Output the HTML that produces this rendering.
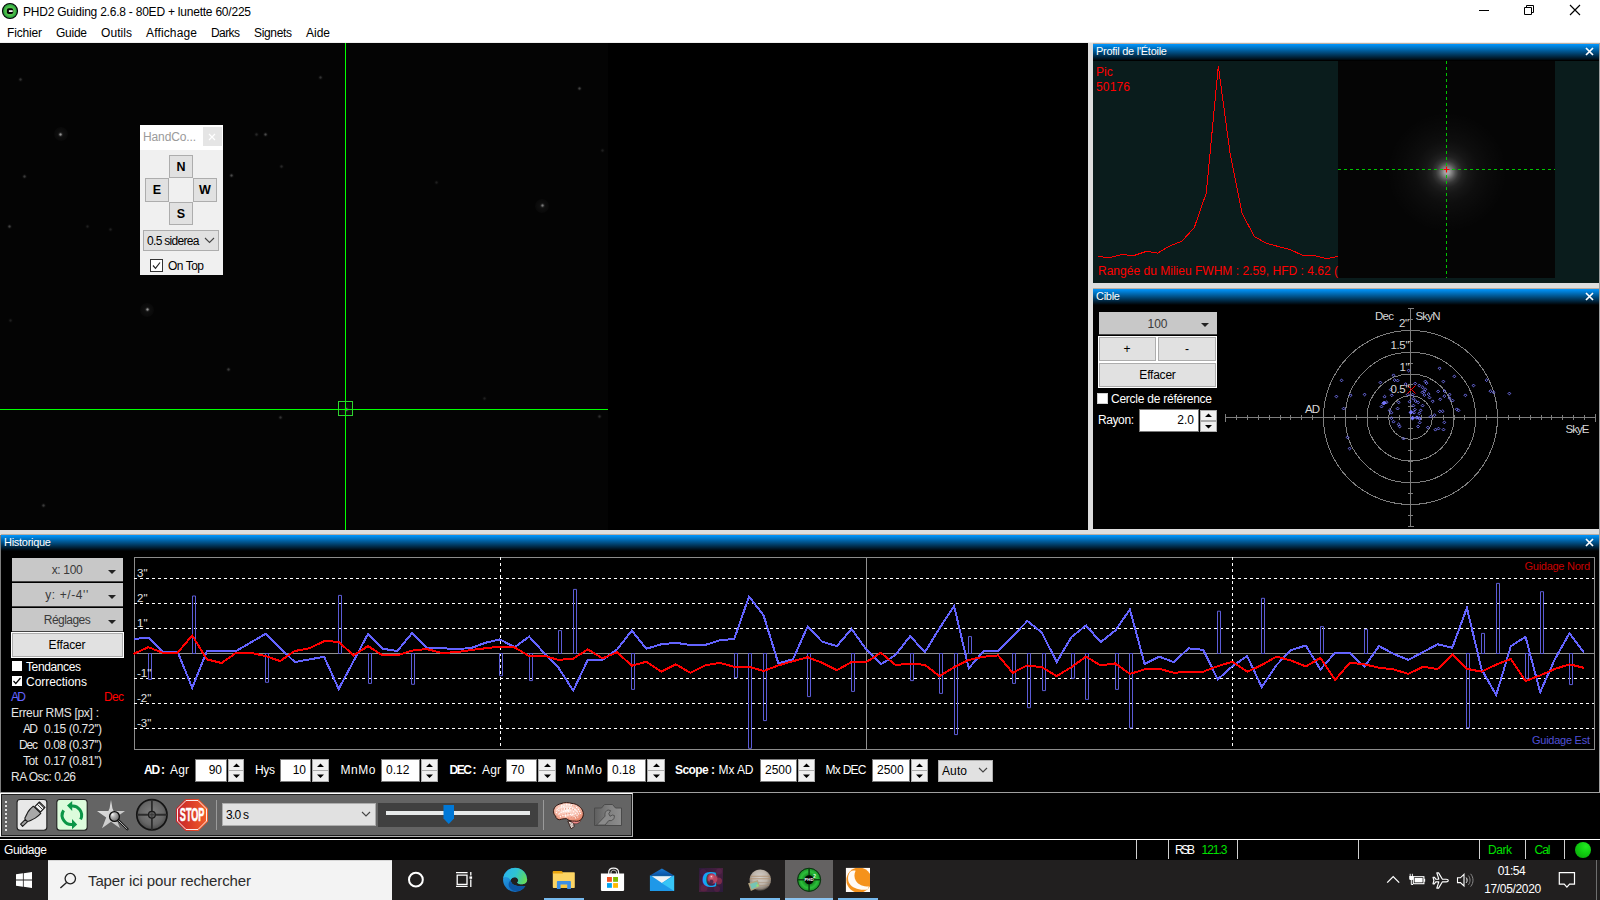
<!DOCTYPE html>
<html><head><meta charset="utf-8"><title>PHD2 Guiding</title>
<style>
html,body{margin:0;padding:0;background:#000;}
body{width:1600px;height:900px;overflow:hidden;position:relative;font-family:"Liberation Sans",sans-serif;font-size:12px;}
div,span.t,svg{position:absolute;box-sizing:border-box;}
.t{white-space:pre;display:block;}
.ttl{background:linear-gradient(#0097ff 0%,#000 100%);border-top:0;}
.btn{background:#e1e1e1;border:1px solid #adadad;}
.dd{background:#c8c8c8;border-bottom:1px solid #444;}
.sp{background:#fff;border:1px solid #7a7a7a;}
.sb{background:#f0f0f0;border:1px solid #acacac;}
</style></head><body>
<div style="left:0px;top:0px;width:1600px;height:43px;background:#fff;"></div><div style="left:0px;top:42px;width:1600px;height:1px;background:#f0f0f0;"></div><svg style="left:1px;top:1.85px" width="18" height="18" viewBox="0 0 18 18"><defs><radialGradient id="apg" cx="50%" cy="50%" r="50%"><stop offset="0" stop-color="#4cbc48"/><stop offset="0.55" stop-color="#56c44e"/><stop offset="0.85" stop-color="#2ea640"/><stop offset="1" stop-color="#1a8c38"/></radialGradient></defs><circle cx="9" cy="9" r="7.5" fill="url(#apg)" stroke="#060606" stroke-width="1.2"/><rect x="5.9" y="6.15" width="6.3" height="5.9" rx="1.8" fill="#050505"/><rect x="7.9" y="8.2" width="3.8" height="1.8" fill="#f4f4f4"/></svg><span class="t" style="top:4.00px;height:17px;line-height:17px;font-size:12px;color:#000;letter-spacing:-0.223px;left:23.00px;">PHD2 Guiding 2.6.8 - 80ED + lunette 60/225</span><span class="t" style="top:25.00px;height:17px;line-height:17px;font-size:12px;color:#000;letter-spacing:-0.169px;left:7.00px;">Fichier</span><span class="t" style="top:25.00px;height:17px;line-height:17px;font-size:12px;color:#000;letter-spacing:-0.258px;left:56.00px;">Guide</span><span class="t" style="top:25.00px;height:17px;line-height:17px;font-size:12px;color:#000;letter-spacing:0.062px;left:101.00px;">Outils</span><span class="t" style="top:25.00px;height:17px;line-height:17px;font-size:12px;color:#000;letter-spacing:0.146px;left:146.00px;">Affichage</span><span class="t" style="top:25.00px;height:17px;line-height:17px;font-size:12px;color:#000;letter-spacing:-0.586px;left:211.00px;">Darks</span><span class="t" style="top:25.00px;height:17px;line-height:17px;font-size:12px;color:#000;letter-spacing:-0.339px;left:254.00px;">Signets</span><span class="t" style="top:25.00px;height:17px;line-height:17px;font-size:12px;color:#000;letter-spacing:-0.010px;left:306.00px;">Aide</span><svg style="left:1470px;top:0" width="130" height="22" viewBox="0 0 130 22" fill="none" stroke="#000" stroke-width="1"><path d="M9 10.5H19"/><path d="M54.5 7.5h7v7h-7z"/><path d="M56.5 7.5v-2h7v7h-2"/><path d="M100 5l10 10M110 5l-10 10" stroke-width="1.15"/></svg><div style="left:0px;top:43px;width:1088px;height:487px;background:#000;overflow:hidden;"><div style="left:0;top:0;width:608px;height:487px;background:#040404"></div><div style="left:58px;top:88.9px;width:5px;height:5px;border-radius:50%;background:radial-gradient(circle,rgba(255,255,255,0.55) 0,rgba(255,255,255,0.47) 22%,rgba(255,255,255,0.12) 45%,rgba(255,255,255,0.028) 70%,rgba(255,255,255,0) 100%);"></div><div style="left:53.5px;top:84.4px;width:14px;height:14px;border-radius:50%;background:radial-gradient(circle,rgba(255,255,255,.06) 0,rgba(255,255,255,.035) 40%,rgba(255,255,255,0) 100%);"></div><div style="left:18px;top:33.9px;width:5px;height:5px;border-radius:50%;background:radial-gradient(circle,rgba(255,255,255,0.19) 0,rgba(255,255,255,0.16) 22%,rgba(255,255,255,0.04) 45%,rgba(255,255,255,0.010) 70%,rgba(255,255,255,0) 100%);"></div><div style="left:22px;top:130.9px;width:5px;height:5px;border-radius:50%;background:radial-gradient(circle,rgba(255,255,255,0.22) 0,rgba(255,255,255,0.19) 22%,rgba(255,255,255,0.05) 45%,rgba(255,255,255,0.011) 70%,rgba(255,255,255,0) 100%);"></div><div style="left:7px;top:180.9px;width:5px;height:5px;border-radius:50%;background:radial-gradient(circle,rgba(255,255,255,0.25) 0,rgba(255,255,255,0.21) 22%,rgba(255,255,255,0.05) 45%,rgba(255,255,255,0.012) 70%,rgba(255,255,255,0) 100%);"></div><div style="left:144.5px;top:264.4px;width:5px;height:5px;border-radius:50%;background:radial-gradient(circle,rgba(255,255,255,0.55) 0,rgba(255,255,255,0.47) 22%,rgba(255,255,255,0.12) 45%,rgba(255,255,255,0.028) 70%,rgba(255,255,255,0) 100%);"></div><div style="left:140px;top:259.9px;width:14px;height:14px;border-radius:50%;background:radial-gradient(circle,rgba(255,255,255,.06) 0,rgba(255,255,255,.035) 40%,rgba(255,255,255,0) 100%);"></div><div style="left:263px;top:88.9px;width:5px;height:5px;border-radius:50%;background:radial-gradient(circle,rgba(255,255,255,0.28) 0,rgba(255,255,255,0.23) 22%,rgba(255,255,255,0.06) 45%,rgba(255,255,255,0.014) 70%,rgba(255,255,255,0) 100%);"></div><div style="left:229px;top:129.9px;width:5px;height:5px;border-radius:50%;background:radial-gradient(circle,rgba(255,255,255,0.28) 0,rgba(255,255,255,0.23) 22%,rgba(255,255,255,0.06) 45%,rgba(255,255,255,0.014) 70%,rgba(255,255,255,0) 100%);"></div><div style="left:279px;top:121.4px;width:5px;height:5px;border-radius:50%;background:radial-gradient(circle,rgba(255,255,255,0.14) 0,rgba(255,255,255,0.12) 22%,rgba(255,255,255,0.03) 45%,rgba(255,255,255,0.007) 70%,rgba(255,255,255,0) 100%);"></div><div style="left:318px;top:32.4px;width:5px;height:5px;border-radius:50%;background:radial-gradient(circle,rgba(255,255,255,0.19) 0,rgba(255,255,255,0.16) 22%,rgba(255,255,255,0.04) 45%,rgba(255,255,255,0.010) 70%,rgba(255,255,255,0) 100%);"></div><div style="left:577px;top:43.4px;width:5px;height:5px;border-radius:50%;background:radial-gradient(circle,rgba(255,255,255,0.25) 0,rgba(255,255,255,0.21) 22%,rgba(255,255,255,0.05) 45%,rgba(255,255,255,0.012) 70%,rgba(255,255,255,0) 100%);"></div><div style="left:539.5px;top:160.4px;width:5px;height:5px;border-radius:50%;background:radial-gradient(circle,rgba(255,255,255,0.44) 0,rgba(255,255,255,0.37) 22%,rgba(255,255,255,0.10) 45%,rgba(255,255,255,0.022) 70%,rgba(255,255,255,0) 100%);"></div><div style="left:535px;top:155.9px;width:14px;height:14px;border-radius:50%;background:radial-gradient(circle,rgba(255,255,255,.06) 0,rgba(255,255,255,.035) 40%,rgba(255,255,255,0) 100%);"></div><div style="left:225.5px;top:323.9px;width:5px;height:5px;border-radius:50%;background:radial-gradient(circle,rgba(255,255,255,0.22) 0,rgba(255,255,255,0.19) 22%,rgba(255,255,255,0.05) 45%,rgba(255,255,255,0.011) 70%,rgba(255,255,255,0) 100%);"></div><div style="left:278px;top:372.4px;width:5px;height:5px;border-radius:50%;background:radial-gradient(circle,rgba(255,255,255,0.19) 0,rgba(255,255,255,0.16) 22%,rgba(255,255,255,0.04) 45%,rgba(255,255,255,0.010) 70%,rgba(255,255,255,0) 100%);"></div><div style="left:596.5px;top:371.4px;width:5px;height:5px;border-radius:50%;background:radial-gradient(circle,rgba(255,255,255,0.17) 0,rgba(255,255,255,0.14) 22%,rgba(255,255,255,0.04) 45%,rgba(255,255,255,0.008) 70%,rgba(255,255,255,0) 100%);"></div><div style="left:434px;top:137.4px;width:5px;height:5px;border-radius:50%;background:radial-gradient(circle,rgba(255,255,255,0.11) 0,rgba(255,255,255,0.09) 22%,rgba(255,255,255,0.02) 45%,rgba(255,255,255,0.006) 70%,rgba(255,255,255,0) 100%);"></div><div style="left:8px;top:274.9px;width:5px;height:5px;border-radius:50%;background:radial-gradient(circle,rgba(255,255,255,0.11) 0,rgba(255,255,255,0.09) 22%,rgba(255,255,255,0.02) 45%,rgba(255,255,255,0.006) 70%,rgba(255,255,255,0) 100%);"></div><div style="left:41px;top:459.9px;width:5px;height:5px;border-radius:50%;background:radial-gradient(circle,rgba(255,255,255,0.22) 0,rgba(255,255,255,0.19) 22%,rgba(255,255,255,0.05) 45%,rgba(255,255,255,0.011) 70%,rgba(255,255,255,0) 100%);"></div><div style="left:254px;top:88.9px;width:5px;height:5px;border-radius:50%;background:radial-gradient(circle,rgba(255,255,255,0.14) 0,rgba(255,255,255,0.12) 22%,rgba(255,255,255,0.03) 45%,rgba(255,255,255,0.007) 70%,rgba(255,255,255,0) 100%);"></div><div style="left:85px;top:180.9px;width:5px;height:5px;border-radius:50%;background:radial-gradient(circle,rgba(255,255,255,0.11) 0,rgba(255,255,255,0.09) 22%,rgba(255,255,255,0.02) 45%,rgba(255,255,255,0.006) 70%,rgba(255,255,255,0) 100%);"></div><div style="left:108px;top:183.9px;width:5px;height:5px;border-radius:50%;background:radial-gradient(circle,rgba(255,255,255,0.11) 0,rgba(255,255,255,0.09) 22%,rgba(255,255,255,0.02) 45%,rgba(255,255,255,0.006) 70%,rgba(255,255,255,0) 100%);"></div><div style="left:482px;top:352.9px;width:5px;height:5px;border-radius:50%;background:radial-gradient(circle,rgba(255,255,255,0.11) 0,rgba(255,255,255,0.09) 22%,rgba(255,255,255,0.02) 45%,rgba(255,255,255,0.006) 70%,rgba(255,255,255,0) 100%);"></div><div style="left:600px;top:104.9px;width:5px;height:5px;border-radius:50%;background:radial-gradient(circle,rgba(255,255,255,0.11) 0,rgba(255,255,255,0.09) 22%,rgba(255,255,255,0.02) 45%,rgba(255,255,255,0.006) 70%,rgba(255,255,255,0) 100%);"></div><div style="left:343.5px;top:364.4px;width:5px;height:5px;border-radius:50%;background:radial-gradient(circle,rgba(255,255,255,0.50) 0,rgba(255,255,255,0.42) 22%,rgba(255,255,255,0.11) 45%,rgba(255,255,255,0.025) 70%,rgba(255,255,255,0) 100%);"></div><div style="left:339px;top:359.9px;width:14px;height:14px;border-radius:50%;background:radial-gradient(circle,rgba(255,255,255,.06) 0,rgba(255,255,255,.035) 40%,rgba(255,255,255,0) 100%);"></div><div style="left:345px;top:0;width:1px;height:487px;background:#00ff00"></div><div style="left:0;top:366px;width:608px;height:1px;background:#00ff00"></div><div style="left:338px;top:358px;width:15px;height:15px;border:1px solid #2fd42f"></div></div><div style="left:1088px;top:43px;width:512px;height:487px;background:#dedede;"></div><div style="left:0px;top:530px;width:1600px;height:5px;background:#dedede;"></div><div style="left:140px;top:125px;width:83px;height:150px;background:#f0f0f0;"></div><div style="left:140px;top:125px;width:83px;height:25px;background:#fff;"></div><span class="t" style="top:129.00px;height:17px;line-height:17px;font-size:12px;color:#9a9a9a;letter-spacing:-0.129px;left:143.00px;">HandCo...</span><div style="left:203px;top:127px;width:19px;height:19px;background:#e5e5e5;"></div><svg style="left:208px;top:133px" width="8" height="8" viewBox="0 0 8 8"><path d="M1 1l6 6M7 1l-6 6" stroke="#fff" stroke-width="1.2"/></svg><div class="btn" style="left:169px;top:155px;width:24px;height:23px;"></div><div class="t" style="top:157.50px;height:18px;line-height:18px;font-size:12.5px;color:#000;font-weight:bold;left:181.00px;width:0;display:flex;justify-content:center;"><span>N</span></div><div class="btn" style="left:145px;top:178px;width:24px;height:24px;"></div><div class="t" style="top:181.00px;height:18px;line-height:18px;font-size:12.5px;color:#000;font-weight:bold;left:157.00px;width:0;display:flex;justify-content:center;"><span>E</span></div><div class="btn" style="left:193px;top:178px;width:24px;height:24px;"></div><div class="t" style="top:181.00px;height:18px;line-height:18px;font-size:12.5px;color:#000;font-weight:bold;left:205.00px;width:0;display:flex;justify-content:center;"><span>W</span></div><div class="btn" style="left:169px;top:202px;width:24px;height:23px;"></div><div class="t" style="top:204.50px;height:18px;line-height:18px;font-size:12.5px;color:#000;font-weight:bold;left:181.00px;width:0;display:flex;justify-content:center;"><span>S</span></div><div class="btn" style="left:143px;top:230px;width:76px;height:21px;"></div><span class="t" style="top:233.00px;height:17px;line-height:17px;font-size:12px;color:#000;letter-spacing:-0.688px;left:147.00px;">0.5 siderea</span><svg style="left:204px;top:237px" width="11" height="7" viewBox="0 0 11 7"><path d="M1 1l4.5 4.5L10 1" fill="none" stroke="#444" stroke-width="1.1"/></svg><div style="left:150px;top:259px;width:13px;height:13px;background:#fff;border:1px solid #333;"></div><svg style="left:151px;top:260px" width="11" height="11" viewBox="0 0 11 11"><path d="M2 5.5l2.5 2.8L9 2.5" fill="none" stroke="#222" stroke-width="1.2"/></svg><span class="t" style="top:258.00px;height:17px;line-height:17px;font-size:12px;color:#000;letter-spacing:-0.497px;left:168.00px;">On Top</span><div style="left:1093px;top:43px;width:506px;height:1px;background:#b9aea4;"></div><div class="ttl" style="left:1093px;top:44px;width:506px;height:16.5px;"></div><div style="left:1093px;top:60px;width:506px;height:1px;background:#000;"></div><span class="t" style="top:44.00px;height:15px;line-height:15px;font-size:11px;color:#fff;letter-spacing:-0.264px;left:1096.00px;">Profil de l'Étoile</span><svg style="left:1584px;top:46px" width="12" height="12" viewBox="0 0 12 12"><path d="M2 2l7 7M9 2l-7 7" stroke="#fff" stroke-width="1.7"/></svg><div style="left:1093px;top:61px;width:506px;height:222px;background:#0a1c1c;"></div><div style="left:1338px;top:61px;width:217px;height:217px;background:#050505;overflow:hidden;"><div style="left:49.3px;top:51px;width:120px;height:120px;border-radius:50%;background:radial-gradient(circle closest-side,rgba(255,255,255,.68) 0,rgba(255,255,255,.62) 4%,rgba(255,255,255,.46) 9%,rgba(255,255,255,.3) 14%,rgba(255,255,255,.19) 19%,rgba(255,255,255,.11) 26%,rgba(255,255,255,.065) 36%,rgba(255,255,255,.035) 52%,rgba(255,255,255,.015) 75%,rgba(255,255,255,0) 100%);"></div><svg style="left:0;top:0" width="217" height="217"><path d="M0 108.5H217M108.5 0V217" stroke="#00c400" stroke-width="1" stroke-dasharray="3 3" fill="none"/><path d="M105.500 108.5h6M108.5 105.500v6" stroke="#ff0000" stroke-width="1.2"/></svg></div><svg style="left:1093px;top:61px" width="506" height="222"><polyline fill="none" stroke="#ff0000" stroke-width="1" shape-rendering="crispEdges" points="5.2,195.4 16.2,196.7 29.0,193.4 40.5,194.7 53.7,190.3 64.7,192.1 76.2,185.2 89.0,180.1 101.3,166.5 113.3,132.0 125.3,5.0 137.1,92.4 149.1,152.5 161.4,175.5 173.4,182.4 186.2,185.7 197.7,188.8 210.4,194.7 222.0,194.7 233.5,197.7 245.0,195.4"/></svg><span class="t" style="top:64.00px;height:17px;line-height:17px;font-size:12px;color:#ff0000;left:1096.00px;">Pic</span><span class="t" style="top:79.00px;height:17px;line-height:17px;font-size:12px;color:#ff0000;letter-spacing:0.156px;left:1096.00px;">50176</span><span class="t" style="top:263.00px;height:17px;line-height:17px;font-size:12px;color:#ff0000;letter-spacing:0.014px;left:1098.00px;">Rangée du Milieu FWHM : 2.59, HFD : 4.62 (</span><div style="left:1093px;top:288px;width:506px;height:1px;background:#b9aea4;"></div><div class="ttl" style="left:1093px;top:289px;width:506px;height:16px;"></div><span class="t" style="top:289.00px;height:15px;line-height:15px;font-size:11px;color:#fff;letter-spacing:-0.270px;left:1096.00px;">Cible</span><svg style="left:1584px;top:291px" width="12" height="12" viewBox="0 0 12 12"><path d="M2 2l7 7M9 2l-7 7" stroke="#fff" stroke-width="1.7"/></svg><div style="left:1093px;top:305px;width:506px;height:224px;background:#000;"></div><div class="dd" style="left:1099px;top:312px;width:118px;height:23px;"></div><div class="t" style="top:316.00px;height:17px;line-height:17px;font-size:12px;color:#3a3a3a;left:1157.50px;width:0;display:flex;justify-content:center;"><span>100</span></div><svg style="left:1200px;top:322px" width="10" height="6" viewBox="0 0 10 6"><path d="M1 1h8L5 5z" fill="#222"/></svg><div style="left:1098px;top:336px;width:119px;height:52px;background:#fff;"></div><div class="btn" style="left:1099px;top:337px;width:57px;height:24px;"></div><div class="t" style="top:341.20px;height:17px;line-height:17px;font-size:12px;color:#000;left:1127.00px;width:0;display:flex;justify-content:center;"><span>+</span></div><div class="btn" style="left:1158px;top:337px;width:58px;height:24px;"></div><div class="t" style="top:341.20px;height:17px;line-height:17px;font-size:12px;color:#000;left:1187.00px;width:0;display:flex;justify-content:center;"><span>-</span></div><div class="btn" style="left:1099px;top:363px;width:117px;height:24px;"></div><div class="t" style="top:366.50px;height:17px;line-height:17px;font-size:12px;color:#000;letter-spacing:-0.219px;left:1157.50px;width:0;display:flex;justify-content:center;"><span>Effacer</span></div><div style="left:1097px;top:393px;width:11px;height:11px;background:#fff;border:1px solid #cfcfcf;"></div><span class="t" style="top:391.00px;height:17px;line-height:17px;font-size:12px;color:#fff;letter-spacing:-0.244px;left:1111.00px;">Cercle de référence</span><span class="t" style="top:411.50px;height:17px;line-height:17px;font-size:12px;color:#fff;letter-spacing:-0.406px;left:1098.00px;">Rayon:</span><div class="sp" style="left:1139px;top:409px;width:60px;height:23px;"></div><span class="t" style="top:412.00px;height:17px;line-height:17px;font-size:12px;color:#000;right:406.00px;">2.0</span><div class="sb" style="left:1200px;top:410px;width:17px;height:11px;"></div><div class="sb" style="left:1200px;top:421px;width:17px;height:11px;"></div><svg style="left:1205px;top:413px" width="7" height="16" viewBox="0 0 7 16"><path d="M0 4h7L3.5 0.5zM0 12h7L3.5 15.5z" fill="#000"/></svg><svg style="left:1220px;top:305px" width="379" height="224" viewBox="1220 305 379 224"><g fill="none" stroke="#7e7e7e" stroke-width="1" shape-rendering="crispEdges"><circle cx="1410.5" cy="417.5" r="21.75"/><circle cx="1410.5" cy="417.5" r="43.5"/><circle cx="1410.5" cy="417.5" r="65.25"/><circle cx="1410.5" cy="417.5" r="87"/><path d="M1225.62 417.5H1595.38 M1410.5 308.75V526.25"/><path d="M1225.62 413.5v8M1236.50 415v5M1247.38 415v5M1258.25 415v5M1269.12 415v5M1280.00 415v5M1290.88 415v5M1301.75 415v5M1312.62 415v5M1323.50 415v5M1334.38 415v5M1345.25 415v5M1356.12 415v5M1367.00 415v5M1377.88 415v5M1388.75 415v5M1399.62 415v5M1421.38 415v5M1432.25 415v5M1443.12 415v5M1454.00 415v5M1464.88 415v5M1475.75 415v5M1486.62 415v5M1497.50 415v5M1508.38 415v5M1519.25 415v5M1530.12 415v5M1541.00 415v5M1551.88 415v5M1562.75 415v5M1573.62 415v5M1584.50 415v5M1595.38 413.5v8M1407.5 308.75h6M1408 319.62h5M1408 330.50h5M1408 341.38h5M1408 352.25h5M1408 363.12h5M1408 374.00h5M1408 384.88h5M1408 395.75h5M1408 406.62h5M1408 428.38h5M1408 439.25h5M1408 450.12h5M1408 461.00h5M1408 471.88h5M1408 482.75h5M1408 493.62h5M1408 504.50h5M1408 515.38h5M1407.5 526.25h6"/></g><g fill="none" stroke="#7878ff" stroke-width="0.9"><path d="M1341.5 379.0l1.4 1.4l-1.4 1.4l-1.4-1.4z"/><path d="M1336.4 395.1l1.4 1.4l-1.4 1.4l-1.4-1.4z"/><path d="M1350.6 393.9l1.4 1.4l-1.4 1.4l-1.4-1.4z"/><path d="M1364.6 393.1l1.4 1.4l-1.4 1.4l-1.4-1.4z"/><path d="M1343.6 407.2l1.4 1.4l-1.4 1.4l-1.4-1.4z"/><path d="M1380.4 381.1l1.4 1.4l-1.4 1.4l-1.4-1.4z"/><path d="M1393.5 373.9l1.4 1.4l-1.4 1.4l-1.4-1.4z"/><path d="M1394.6 378.8l1.4 1.4l-1.4 1.4l-1.4-1.4z"/><path d="M1397.6 379.2l1.4 1.4l-1.4 1.4l-1.4-1.4z"/><path d="M1408.6 369.1l1.4 1.4l-1.4 1.4l-1.4-1.4z"/><path d="M1405.6 382.7l1.4 1.4l-1.4 1.4l-1.4-1.4z"/><path d="M1415.2 382.1l1.4 1.4l-1.4 1.4l-1.4-1.4z"/><path d="M1390.7 388.2l1.4 1.4l-1.4 1.4l-1.4-1.4z"/><path d="M1391.8 393.9l1.4 1.4l-1.4 1.4l-1.4-1.4z"/><path d="M1384.6 395.3l1.4 1.4l-1.4 1.4l-1.4-1.4z"/><path d="M1383.2 402.0l1.4 1.4l-1.4 1.4l-1.4-1.4z"/><path d="M1384.8 401.4l1.4 1.4l-1.4 1.4l-1.4-1.4z"/><path d="M1386.6 401.0l1.4 1.4l-1.4 1.4l-1.4-1.4z"/><path d="M1381.5 405.2l1.4 1.4l-1.4 1.4l-1.4-1.4z"/><path d="M1398.7 401.0l1.4 1.4l-1.4 1.4l-1.4-1.4z"/><path d="M1397.6 407.2l1.4 1.4l-1.4 1.4l-1.4-1.4z"/><path d="M1389.6 409.0l1.4 1.4l-1.4 1.4l-1.4-1.4z"/><path d="M1391.4 411.3l1.4 1.4l-1.4 1.4l-1.4-1.4z"/><path d="M1391.4 416.8l1.4 1.4l-1.4 1.4l-1.4-1.4z"/><path d="M1409.6 400.3l1.4 1.4l-1.4 1.4l-1.4-1.4z"/><path d="M1413.4 397.3l1.4 1.4l-1.4 1.4l-1.4-1.4z"/><path d="M1415.5 399.7l1.4 1.4l-1.4 1.4l-1.4-1.4z"/><path d="M1418.2 401.0l1.4 1.4l-1.4 1.4l-1.4-1.4z"/><path d="M1413.4 404.2l1.4 1.4l-1.4 1.4l-1.4-1.4z"/><path d="M1414.8 408.2l1.4 1.4l-1.4 1.4l-1.4-1.4z"/><path d="M1410.7 411.3l1.4 1.4l-1.4 1.4l-1.4-1.4z"/><path d="M1414.1 411.3l1.4 1.4l-1.4 1.4l-1.4-1.4z"/><path d="M1412.7 416.2l1.4 1.4l-1.4 1.4l-1.4-1.4z"/><path d="M1416.9 415.9l1.4 1.4l-1.4 1.4l-1.4-1.4z"/><path d="M1419.3 416.6l1.4 1.4l-1.4 1.4l-1.4-1.4z"/><path d="M1420.7 409.0l1.4 1.4l-1.4 1.4l-1.4-1.4z"/><path d="M1419.3 412.0l1.4 1.4l-1.4 1.4l-1.4-1.4z"/><path d="M1422.6 404.2l1.4 1.4l-1.4 1.4l-1.4-1.4z"/><path d="M1419.3 384.1l1.4 1.4l-1.4 1.4l-1.4-1.4z"/><path d="M1422.6 386.0l1.4 1.4l-1.4 1.4l-1.4-1.4z"/><path d="M1425.4 380.1l1.4 1.4l-1.4 1.4l-1.4-1.4z"/><path d="M1426.5 381.8l1.4 1.4l-1.4 1.4l-1.4-1.4z"/><path d="M1425.4 388.0l1.4 1.4l-1.4 1.4l-1.4-1.4z"/><path d="M1424.4 390.0l1.4 1.4l-1.4 1.4l-1.4-1.4z"/><path d="M1422.4 391.0l1.4 1.4l-1.4 1.4l-1.4-1.4z"/><path d="M1424.4 393.7l1.4 1.4l-1.4 1.4l-1.4-1.4z"/><path d="M1428.6 392.8l1.4 1.4l-1.4 1.4l-1.4-1.4z"/><path d="M1429.5 396.2l1.4 1.4l-1.4 1.4l-1.4-1.4z"/><path d="M1432.7 399.9l1.4 1.4l-1.4 1.4l-1.4-1.4z"/><path d="M1438.2 390.0l1.4 1.4l-1.4 1.4l-1.4-1.4z"/><path d="M1440.2 397.9l1.4 1.4l-1.4 1.4l-1.4-1.4z"/><path d="M1444.4 389.6l1.4 1.4l-1.4 1.4l-1.4-1.4z"/><path d="M1444.4 394.8l1.4 1.4l-1.4 1.4l-1.4-1.4z"/><path d="M1449.6 393.1l1.4 1.4l-1.4 1.4l-1.4-1.4z"/><path d="M1449.6 396.9l1.4 1.4l-1.4 1.4l-1.4-1.4z"/><path d="M1452.6 399.2l1.4 1.4l-1.4 1.4l-1.4-1.4z"/><path d="M1439.6 366.9l1.4 1.4l-1.4 1.4l-1.4-1.4z"/><path d="M1443.4 380.1l1.4 1.4l-1.4 1.4l-1.4-1.4z"/><path d="M1454.4 375.0l1.4 1.4l-1.4 1.4l-1.4-1.4z"/><path d="M1473.5 384.1l1.4 1.4l-1.4 1.4l-1.4-1.4z"/><path d="M1465.4 393.9l1.4 1.4l-1.4 1.4l-1.4-1.4z"/><path d="M1486.6 378.8l1.4 1.4l-1.4 1.4l-1.4-1.4z"/><path d="M1490.4 389.8l1.4 1.4l-1.4 1.4l-1.4-1.4z"/><path d="M1493.6 391.0l1.4 1.4l-1.4 1.4l-1.4-1.4z"/><path d="M1509.4 392.1l1.4 1.4l-1.4 1.4l-1.4-1.4z"/><path d="M1456.7 407.9l1.4 1.4l-1.4 1.4l-1.4-1.4z"/><path d="M1458.5 409.0l1.4 1.4l-1.4 1.4l-1.4-1.4z"/><path d="M1439.8 410.0l1.4 1.4l-1.4 1.4l-1.4-1.4z"/><path d="M1442.6 410.0l1.4 1.4l-1.4 1.4l-1.4-1.4z"/><path d="M1434.5 413.8l1.4 1.4l-1.4 1.4l-1.4-1.4z"/><path d="M1430.6 415.2l1.4 1.4l-1.4 1.4l-1.4-1.4z"/><path d="M1412.7 393.2l1.4 1.4l-1.4 1.4l-1.4-1.4z"/><path d="M1407.7 393.2l1.4 1.4l-1.4 1.4l-1.4-1.4z"/><path d="M1393.5 420.3l1.4 1.4l-1.4 1.4l-1.4-1.4z"/><path d="M1398.6 423.0l1.4 1.4l-1.4 1.4l-1.4-1.4z"/><path d="M1399.7 425.1l1.4 1.4l-1.4 1.4l-1.4-1.4z"/><path d="M1403.5 437.2l1.4 1.4l-1.4 1.4l-1.4-1.4z"/><path d="M1347.5 436.0l1.4 1.4l-1.4 1.4l-1.4-1.4z"/><path d="M1349.6 447.1l1.4 1.4l-1.4 1.4l-1.4-1.4z"/><path d="M1418.1 425.1l1.4 1.4l-1.4 1.4l-1.4-1.4z"/><path d="M1419.7 421.2l1.4 1.4l-1.4 1.4l-1.4-1.4z"/><path d="M1419.7 417.5l1.4 1.4l-1.4 1.4l-1.4-1.4z"/><path d="M1416.7 416.4l1.4 1.4l-1.4 1.4l-1.4-1.4z"/><path d="M1427.8 426.1l1.4 1.4l-1.4 1.4l-1.4-1.4z"/><path d="M1435.4 428.3l1.4 1.4l-1.4 1.4l-1.4-1.4z"/><path d="M1438.5 427.2l1.4 1.4l-1.4 1.4l-1.4-1.4z"/><path d="M1443.5 428.2l1.4 1.4l-1.4 1.4l-1.4-1.4z"/><path d="M1444.4 421.0l1.4 1.4l-1.4 1.4l-1.4-1.4z"/></g><g fill="#7878ff" stroke="#7878ff" stroke-width="0.9"><path d="M1412.5 416.4l1.8 1.8l-1.8 1.8l-1.8-1.8z"/><path d="M1411.1 410.4l1.8 1.8l-1.8 1.8l-1.8-1.8z"/><path d="M1384.0 401.2l1.8 1.8l-1.8 1.8l-1.8-1.8z"/></g><path d="M1407.5 385.5l8 8M1415.5 385.5l-8 8" stroke="#ff0000" stroke-width="1" fill="none"/></svg><span class="t" style="top:307.50px;height:16px;line-height:16px;font-size:11.5px;color:#d8d8d8;letter-spacing:-0.727px;left:1375.00px;">Dec</span><span class="t" style="top:307.50px;height:16px;line-height:16px;font-size:11.5px;color:#d8d8d8;letter-spacing:-0.828px;left:1415.50px;">SkyN</span><span class="t" style="top:314.70px;height:16px;line-height:16px;font-size:11.5px;color:#d8d8d8;letter-spacing:-0.484px;left:1399.00px;">2"</span><span class="t" style="top:337.40px;height:16px;line-height:16px;font-size:11.5px;color:#d8d8d8;letter-spacing:-0.359px;left:1390.50px;">1.5"</span><span class="t" style="top:359.00px;height:16px;line-height:16px;font-size:11.5px;color:#d8d8d8;letter-spacing:-0.484px;left:1399.50px;">1"</span><span class="t" style="top:381.40px;height:16px;line-height:16px;font-size:11.5px;color:#d8d8d8;letter-spacing:-0.359px;left:1390.50px;">0.5"</span><span class="t" style="top:401.30px;height:16px;line-height:16px;font-size:11.5px;color:#d8d8d8;letter-spacing:-0.984px;left:1305.00px;">AD</span><span class="t" style="top:421.20px;height:16px;line-height:16px;font-size:11.5px;color:#d8d8d8;letter-spacing:-0.948px;left:1565.50px;">SkyE</span><div style="left:1px;top:534px;width:1598px;height:1px;background:#b9aea4;"></div><div class="ttl" style="left:1px;top:535px;width:1598px;height:16px;"></div><span class="t" style="top:535.00px;height:15px;line-height:15px;font-size:11px;color:#fff;letter-spacing:-0.281px;left:4.00px;">Historique</span><svg style="left:1584px;top:537px" width="12" height="12" viewBox="0 0 12 12"><path d="M2 2l7 7M9 2l-7 7" stroke="#fff" stroke-width="1.7"/></svg><div style="left:0px;top:551px;width:1600px;height:241px;background:#000;"></div><div style="left:0px;top:535px;width:1px;height:257px;background:#7c7c7c;"></div><div style="left:1599px;top:43px;width:1px;height:750px;background:#a0a0a0;"></div><div class="dd" style="left:12px;top:558px;width:111px;height:24px;"></div><div class="t" style="top:562.00px;height:17px;line-height:17px;font-size:12px;color:#3a3a3a;letter-spacing:-0.341px;left:67.00px;width:0;display:flex;justify-content:center;"><span>x: 100</span></div><svg style="left:107px;top:569px" width="10" height="6" viewBox="0 0 10 6"><path d="M1 1h8L5 5z" fill="#222"/></svg><div class="dd" style="left:12px;top:583px;width:111px;height:24px;"></div><div class="t" style="top:587.00px;height:17px;line-height:17px;font-size:12px;color:#3a3a3a;letter-spacing:0.592px;left:67.00px;width:0;display:flex;justify-content:center;"><span>y: +/-4''</span></div><svg style="left:107px;top:594px" width="10" height="6" viewBox="0 0 10 6"><path d="M1 1h8L5 5z" fill="#222"/></svg><div class="dd" style="left:12px;top:608px;width:111px;height:24px;"></div><div class="t" style="top:612.00px;height:17px;line-height:17px;font-size:12px;color:#3a3a3a;letter-spacing:-0.529px;left:67.00px;width:0;display:flex;justify-content:center;"><span>Réglages</span></div><svg style="left:107px;top:619px" width="10" height="6" viewBox="0 0 10 6"><path d="M1 1h8L5 5z" fill="#222"/></svg><div style="left:11px;top:632px;width:113px;height:26px;background:#fff;"></div><div class="btn" style="left:12px;top:633px;width:111px;height:24px;"></div><div class="t" style="top:636.50px;height:17px;line-height:17px;font-size:12px;color:#000;letter-spacing:-0.135px;left:67.00px;width:0;display:flex;justify-content:center;"><span>Effacer</span></div><div style="left:12px;top:661px;width:10px;height:10px;background:#fff;"></div><span class="t" style="top:658.50px;height:17px;line-height:17px;font-size:12px;color:#fff;letter-spacing:-0.381px;left:26.00px;">Tendances</span><div style="left:12px;top:676px;width:10px;height:10px;background:#fff;"></div><svg style="left:12px;top:676px" width="10" height="10" viewBox="0 0 10 10"><path d="M1.5 5l2.3 2.5L8.5 2" fill="none" stroke="#000" stroke-width="1.2"/></svg><span class="t" style="top:673.50px;height:17px;line-height:17px;font-size:12px;color:#fff;letter-spacing:-0.036px;left:26.00px;">Corrections</span><span class="t" style="top:688.50px;height:17px;line-height:17px;font-size:12px;color:#6464ff;letter-spacing:-1.672px;left:11.00px;">AD</span><span class="t" style="top:688.50px;height:17px;line-height:17px;font-size:12px;color:#ff0000;letter-spacing:-0.672px;left:104.00px;">Dec</span><span class="t" style="top:704.50px;height:17px;line-height:17px;font-size:12px;color:#e6e6e6;letter-spacing:-0.293px;left:11.00px;">Erreur RMS [px] :</span><span class="t" style="top:720.50px;height:17px;line-height:17px;font-size:12px;color:#e6e6e6;letter-spacing:-1.672px;left:23.00px;">AD</span><span class="t" style="top:720.50px;height:17px;line-height:17px;font-size:12px;color:#e6e6e6;letter-spacing:-0.385px;left:44.00px;">0.15 (0.72'')</span><span class="t" style="top:736.50px;height:17px;line-height:17px;font-size:12px;color:#e6e6e6;letter-spacing:-1.172px;left:19.00px;">Dec</span><span class="t" style="top:736.50px;height:17px;line-height:17px;font-size:12px;color:#e6e6e6;letter-spacing:-0.385px;left:44.00px;">0.08 (0.37'')</span><span class="t" style="top:752.50px;height:17px;line-height:17px;font-size:12px;color:#e6e6e6;letter-spacing:-0.508px;left:23.00px;">Tot</span><span class="t" style="top:752.50px;height:17px;line-height:17px;font-size:12px;color:#e6e6e6;letter-spacing:-0.385px;left:44.00px;">0.17 (0.81'')</span><span class="t" style="top:768.50px;height:17px;line-height:17px;font-size:12px;color:#e6e6e6;letter-spacing:-0.518px;left:11.00px;">RA Osc: 0.26</span><svg style="left:130px;top:553px" width="1470" height="200" viewBox="130 553 1470 200"><rect x="134.5" y="557.5" width="1460" height="192" fill="#000" stroke="#8c8c8c" stroke-width="1"/><path d="M134 578.5H1594M134 603.5H1594M134 628.5H1594M134 678.5H1594M134 703.5H1594M134 728.5H1594" stroke="#fff" stroke-width="1" stroke-dasharray="3 3" fill="none"/><path d="M500.5 557V749M1232.5 557V749" stroke="#fff" stroke-width="1" stroke-dasharray="3 3" fill="none"/><path d="M135 653.5H1594M866.5 558V749" stroke="#909090" stroke-width="1" fill="none"/><path d="M148.5 653.5h3V679.4h-3zM192.5 596.0h3V653.5h-3zM265.5 653.5h3V682.3h-3zM338.5 595.4h3V653.5h-3zM368.5 653.5h3V683.4h-3zM411.5 653.5h3V684.3h-3zM499.5 653.5h3V675.7h-3zM529.5 653.5h3V680.6h-3zM558.5 630.6h3V653.5h-3zM573.5 589.4h3V653.5h-3zM631.5 653.5h3V689.4h-3zM734.5 653.5h3V677.7h-3zM748.5 653.5h3V748.3h-3zM763.5 653.5h3V720.6h-3zM807.5 653.5h3V696.6h-3zM851.5 653.5h3V691.4h-3zM910.5 653.5h3V680.6h-3zM939.5 653.5h3V693.4h-3zM954.5 653.5h3V734.6h-3zM968.5 636.6h3V653.5h-3zM1012.5 653.5h3V683.4h-3zM1027.5 653.5h3V707.7h-3zM1042.5 653.5h3V690.6h-3zM1071.5 653.5h3V678.3h-3zM1085.5 653.5h3V699.4h-3zM1115.5 653.5h3V689.4h-3zM1129.5 653.5h3V727.9h-3zM1217.5 611.2h3V653.5h-3zM1261.5 598.3h3V653.5h-3zM1320.5 626.6h3V653.5h-3zM1364.5 629.4h3V653.5h-3zM1466.5 653.5h3V727.7h-3zM1481.5 633.4h3V653.5h-3zM1496.5 583.4h3V653.5h-3zM1525.5 653.5h3V678.3h-3zM1540.5 591.7h3V653.5h-3zM1569.5 653.5h3V684.6h-3z" stroke="#5c5cd6" stroke-width="1" fill="none"/><polyline fill="none" stroke="#6464ff" stroke-width="2" shape-rendering="crispEdges" points="133.6,639.0 148.3,637.7 162.9,651.7 177.6,651.7 192.2,687.9 206.9,651.0 221.5,651.0 236.2,651.0 250.8,642.5 265.5,633.9 280.1,648.0 294.8,662.1 309.4,659.4 324.1,656.8 338.7,689.0 353.4,661.4 368.0,633.9 382.7,648.8 397.3,651.0 412.0,633.2 426.6,647.9 441.3,648.3 455.9,648.8 470.6,648.3 485.2,642.8 499.9,639.4 514.6,647.2 529.2,636.6 543.9,652.8 558.5,667.7 573.2,690.6 587.8,659.9 602.5,659.9 617.1,649.4 631.8,630.6 646.4,648.8 661.1,644.3 675.7,642.8 690.4,645.0 705.0,645.0 719.7,640.4 734.3,638.8 749.0,596.6 763.6,615.4 778.3,663.2 792.9,659.4 807.6,626.6 822.2,641.7 836.9,646.1 851.5,629.0 866.2,649.4 880.9,664.3 895.5,655.0 910.2,636.1 924.8,652.3 939.5,628.3 954.1,606.1 968.8,668.3 983.4,651.2 998.1,651.2 1012.7,636.1 1027.4,621.0 1042.0,632.8 1056.7,662.1 1071.3,637.2 1086.0,625.4 1100.6,642.1 1115.3,630.6 1129.9,609.4 1144.6,663.9 1159.2,656.6 1173.9,662.1 1188.5,648.3 1203.2,649.9 1217.8,679.4 1232.5,666.1 1247.2,656.1 1261.8,687.2 1276.5,665.0 1291.1,650.1 1305.8,645.5 1320.4,669.4 1335.1,652.8 1349.7,652.8 1364.4,666.8 1379.0,646.1 1393.7,653.9 1408.3,659.9 1423.0,652.1 1437.6,644.3 1452.3,647.7 1466.9,607.9 1481.6,669.4 1496.2,695.0 1510.9,646.1 1525.5,636.8 1540.2,692.1 1554.8,659.4 1569.5,633.2 1584.1,652.8"/><polyline fill="none" stroke="#ff0000" stroke-width="2" shape-rendering="crispEdges" points="133.6,653.9 148.3,647.2 162.9,652.8 177.6,652.8 192.2,635.4 206.9,659.4 221.5,663.0 236.2,652.8 250.8,652.8 265.5,656.1 280.1,661.0 294.8,651.0 309.4,648.3 324.1,641.2 338.7,641.7 353.4,655.4 368.0,646.1 382.7,655.4 397.3,655.4 412.0,650.6 426.6,649.0 441.3,652.8 455.9,652.3 470.6,650.1 485.2,648.3 499.9,646.6 514.6,647.4 529.2,656.1 543.9,655.7 558.5,659.9 573.2,658.6 587.8,649.4 602.5,658.3 617.1,652.3 631.8,665.7 646.4,661.7 661.1,671.7 675.7,664.3 690.4,672.8 705.0,665.4 719.7,662.8 734.3,666.8 749.0,666.8 763.6,671.0 778.3,665.4 792.9,661.2 807.6,657.2 822.2,662.8 836.9,670.1 851.5,662.1 866.2,662.1 880.9,652.8 895.5,665.0 910.2,663.7 924.8,664.8 939.5,676.1 954.1,667.2 968.8,659.9 983.4,656.8 998.1,655.4 1012.7,672.8 1027.4,665.4 1042.0,667.2 1056.7,676.1 1071.3,667.2 1086.0,656.6 1100.6,665.4 1115.3,663.4 1129.9,673.9 1144.6,669.4 1159.2,668.8 1173.9,672.8 1188.5,671.7 1203.2,671.7 1217.8,666.1 1232.5,661.7 1247.2,671.7 1261.8,665.0 1276.5,656.6 1291.1,660.6 1305.8,666.5 1320.4,657.9 1335.1,679.9 1349.7,662.8 1364.4,664.3 1379.0,667.7 1393.7,669.4 1408.3,673.9 1423.0,666.8 1437.6,669.0 1452.3,654.6 1466.9,668.8 1481.6,671.7 1496.2,664.6 1510.9,659.0 1525.5,681.0 1540.2,675.4 1554.8,669.0 1569.5,664.3 1584.1,667.9"/></svg><span class="t" style="top:564.50px;height:16px;line-height:16px;font-size:11.5px;color:#e0e0e0;left:137.00px;">3"</span><span class="t" style="top:589.50px;height:16px;line-height:16px;font-size:11.5px;color:#e0e0e0;left:137.00px;">2"</span><span class="t" style="top:614.50px;height:16px;line-height:16px;font-size:11.5px;color:#e0e0e0;left:137.00px;">1"</span><span class="t" style="top:664.50px;height:16px;line-height:16px;font-size:11.5px;color:#e0e0e0;left:137.00px;">-1"</span><span class="t" style="top:689.50px;height:16px;line-height:16px;font-size:11.5px;color:#e0e0e0;left:137.00px;">-2"</span><span class="t" style="top:714.50px;height:16px;line-height:16px;font-size:11.5px;color:#e0e0e0;left:137.00px;">-3"</span><span class="t" style="top:558.50px;height:15px;line-height:15px;font-size:11px;color:#c80000;letter-spacing:-0.273px;right:10.27px;">Guidage Nord</span><span class="t" style="top:733.00px;height:15px;line-height:15px;font-size:11px;color:#5050d8;letter-spacing:-0.255px;right:10.25px;">Guidage Est</span><span class="t" style="top:761.50px;height:17px;line-height:17px;font-size:12px;color:#fff;font-weight:bold;letter-spacing:-1.224px;left:144.00px;">AD :</span><span class="t" style="top:761.50px;height:17px;line-height:17px;font-size:12px;color:#fff;letter-spacing:0.156px;left:170.00px;">Agr</span><div class="sp" style="left:195px;top:759px;width:32px;height:23px;"></div><span class="t" style="top:762.00px;height:17px;line-height:17px;font-size:12px;color:#000;right:1378.00px;">90</span><div class="sb" style="left:228px;top:759px;width:16px;height:12px;"></div><div class="sb" style="left:228px;top:770px;width:16px;height:12px;"></div><svg style="left:232.5px;top:763px" width="7" height="16" viewBox="0 0 7 16"><path d="M0 4h7L3.5 0.5zM0 11.5h7L3.5 15z" fill="#000"/></svg><span class="t" style="top:761.50px;height:17px;line-height:17px;font-size:12px;color:#fff;letter-spacing:-0.336px;left:255.00px;">Hys</span><div class="sp" style="left:280px;top:759px;width:31px;height:23px;"></div><span class="t" style="top:762.00px;height:17px;line-height:17px;font-size:12px;color:#000;right:1294.00px;">10</span><div class="sb" style="left:312px;top:759px;width:17px;height:12px;"></div><div class="sb" style="left:312px;top:770px;width:17px;height:12px;"></div><svg style="left:317px;top:763px" width="7" height="16" viewBox="0 0 7 16"><path d="M0 4h7L3.5 0.5zM0 11.5h7L3.5 15z" fill="#000"/></svg><span class="t" style="top:761.50px;height:17px;line-height:17px;font-size:12px;color:#fff;letter-spacing:0.552px;left:340.50px;">MnMo</span><div class="sp" style="left:381px;top:759px;width:39px;height:23px;"></div><span class="t" style="top:762.00px;height:17px;line-height:17px;font-size:12px;color:#000;left:386.00px;">0.12</span><div class="sb" style="left:421px;top:759px;width:17px;height:12px;"></div><div class="sb" style="left:421px;top:770px;width:17px;height:12px;"></div><svg style="left:426px;top:763px" width="7" height="16" viewBox="0 0 7 16"><path d="M0 4h7L3.5 0.5zM0 11.5h7L3.5 15z" fill="#000"/></svg><span class="t" style="top:761.50px;height:17px;line-height:17px;font-size:12px;color:#fff;font-weight:bold;letter-spacing:-1.418px;left:449.50px;">DEC :</span><span class="t" style="top:761.50px;height:17px;line-height:17px;font-size:12px;color:#fff;letter-spacing:0.156px;left:482.00px;">Agr</span><div class="sp" style="left:506px;top:759px;width:31px;height:23px;"></div><span class="t" style="top:762.00px;height:17px;line-height:17px;font-size:12px;color:#000;left:511.00px;">70</span><div class="sb" style="left:538px;top:759px;width:18px;height:12px;"></div><div class="sb" style="left:538px;top:770px;width:18px;height:12px;"></div><svg style="left:543.5px;top:763px" width="7" height="16" viewBox="0 0 7 16"><path d="M0 4h7L3.5 0.5zM0 11.5h7L3.5 15z" fill="#000"/></svg><span class="t" style="top:761.50px;height:17px;line-height:17px;font-size:12px;color:#fff;letter-spacing:0.885px;left:566.00px;">MnMo</span><div class="sp" style="left:607px;top:759px;width:39px;height:23px;"></div><span class="t" style="top:762.00px;height:17px;line-height:17px;font-size:12px;color:#000;left:612.00px;">0.18</span><div class="sb" style="left:647px;top:759px;width:18px;height:12px;"></div><div class="sb" style="left:647px;top:770px;width:18px;height:12px;"></div><svg style="left:652.5px;top:763px" width="7" height="16" viewBox="0 0 7 16"><path d="M0 4h7L3.5 0.5zM0 11.5h7L3.5 15z" fill="#000"/></svg><span class="t" style="top:761.50px;height:17px;line-height:17px;font-size:12px;color:#fff;font-weight:bold;letter-spacing:-0.557px;left:675.00px;">Scope :</span><span class="t" style="top:761.50px;height:17px;line-height:17px;font-size:12px;color:#fff;letter-spacing:-0.086px;left:718.50px;">Mx AD</span><div class="sp" style="left:760px;top:759px;width:37px;height:23px;"></div><span class="t" style="top:762.00px;height:17px;line-height:17px;font-size:12px;color:#000;left:765.00px;">2500</span><div class="sb" style="left:798px;top:759px;width:17px;height:12px;"></div><div class="sb" style="left:798px;top:770px;width:17px;height:12px;"></div><svg style="left:803px;top:763px" width="7" height="16" viewBox="0 0 7 16"><path d="M0 4h7L3.5 0.5zM0 11.5h7L3.5 15z" fill="#000"/></svg><span class="t" style="top:761.50px;height:17px;line-height:17px;font-size:12px;color:#fff;letter-spacing:-0.734px;left:825.50px;">Mx DEC</span><div class="sp" style="left:872px;top:759px;width:38px;height:23px;"></div><span class="t" style="top:762.00px;height:17px;line-height:17px;font-size:12px;color:#000;left:877.00px;">2500</span><div class="sb" style="left:911px;top:759px;width:17px;height:12px;"></div><div class="sb" style="left:911px;top:770px;width:17px;height:12px;"></div><svg style="left:916px;top:763px" width="7" height="16" viewBox="0 0 7 16"><path d="M0 4h7L3.5 0.5zM0 11.5h7L3.5 15z" fill="#000"/></svg><div class="btn" style="left:938px;top:759.5px;width:54.5px;height:22px;"></div><span class="t" style="top:763.00px;height:17px;line-height:17px;font-size:12px;color:#000;letter-spacing:0.104px;left:942.00px;">Auto</span><svg style="left:978px;top:767px" width="10" height="7" viewBox="0 0 10 7"><path d="M1 1l4 4 4-4" fill="none" stroke="#444" stroke-width="1.1"/></svg><div style="left:0px;top:792px;width:1600px;height:1px;background:#a0a0a0;"></div><div style="left:0px;top:839px;width:1600px;height:1px;background:#fff;"></div><div style="left:0px;top:793px;width:633px;height:44px;background:#646464;border:1px solid #b2b2b2;border-left-color:#fff;border-top-color:#fff;"></div><div style="left:1px;top:794px;width:631px;height:42px;border:1px solid #1e1e1e;"></div><div style="left:5px;top:801px;width:2px;height:30px;background:repeating-linear-gradient(#e0e0e0 0 2px,transparent 2px 4px);"></div><svg style="left:0;top:793px" width="640" height="46" viewBox="0 793 640 46">
<defs>
<radialGradient id="gcr" cx="50%" cy="45%" r="55%"><stop offset="0" stop-color="#808080"/><stop offset="0.7" stop-color="#666"/><stop offset="1" stop-color="#484848"/></radialGradient>
<linearGradient id="gst" x1="0" x2="1" y1="0" y2="0"><stop offset="0" stop-color="#c4232b"/><stop offset="0.5" stop-color="#dd3f28"/><stop offset="1" stop-color="#f4602a"/></linearGradient>
<radialGradient id="glens" cx="30%" cy="30%" r="75%"><stop offset="0" stop-color="#f4f4f4"/><stop offset="0.35" stop-color="#b4b4b4"/><stop offset="1" stop-color="#6c6c6c"/></radialGradient>
<linearGradient id="gstar" x1="0" x2="1" y1="0" y2="1"><stop offset="0" stop-color="#e6e6e6"/><stop offset="1" stop-color="#bdbdbd"/></linearGradient>
<linearGradient id="gcam" x1="0" x2="1" y1="0" y2="0"><stop offset="0" stop-color="#5e5e5e"/><stop offset="0.55" stop-color="#808080"/><stop offset="1" stop-color="#8e8e8e"/></linearGradient>
<radialGradient id="gbr" cx="45%" cy="35%" r="72%"><stop offset="0" stop-color="#fff0ea"/><stop offset="0.5" stop-color="#f8bfae"/><stop offset="1" stop-color="#e27f62"/></radialGradient>
</defs>
<rect x="17.05" y="799.55" width="29.8" height="30.65" rx="3" fill="#e8e8e8" stroke="#1e1e1e" stroke-width="1.1"/>
<rect x="56.8" y="799.55" width="30.4" height="30.65" rx="3" fill="#dcfcdc" stroke="#1e1e1e" stroke-width="1.1"/>
<!-- usb plug -->
<g stroke="#1c1c1c" stroke-width="1.1" stroke-linejoin="round">
<path d="M25.4 819.4L20.6 824.2L22.6 826.4L27.6 821.6z" fill="#a0a0a0"/>
<path d="M33.3 806.2L40.8 813.4C39 815.5 37 817 35.2 818.1C33 819.4 31 820.2 29.3 821C28.2 821.5 27.2 821.3 26.4 820.6L25.2 819.4C24.6 818.6 24.8 817.6 25.6 816.6C26.6 815 27.2 813.4 28.2 811.6C29.4 809.6 31.2 808 33.3 806.2z" fill="#a8a8a8"/>
<path d="M39.4 802L45 807.4L40.5 812L34.8 806.6z" fill="#f4f4f4"/>
<path d="M37.2 804.3L42.8 809.8M38.7 802.9L44.2 808.3" fill="none" stroke-width="0.9"/>
</g>
<!-- loop arrows -->
<g fill="none" stroke="#0a9647" stroke-width="3" stroke-linecap="butt">
<path d="M70.5 806.2A9.2 9.2 0 0 1 80.6 819.4"/>
<path d="M63.6 810.4A9.2 9.2 0 0 0 73.6 824.2"/>
</g>
<path d="M67 805.6L72.2 801V811z" fill="#0a9647"/>
<path d="M77.2 824.4L72 819V829.2z" fill="#0a9647"/>
<!-- star + magnifier -->
<path d="M111 800L112.4 808.2L113.6 811L125 811L115.8 817.6L120 828.2L111 821.8L102 828.2L106.2 817.6L97 811L108.4 811L109.6 808.2z" fill="url(#gstar)"/>
<path d="M118.2 820.2L127.4 829.2" stroke="#111" stroke-width="2.4" stroke-linecap="round"/>
<path d="M118.6 820.6L127 828.8" stroke="#e8e8e8" stroke-width="0.8" stroke-linecap="round"/>
<circle cx="114.5" cy="816.5" r="4.9" fill="url(#glens)" stroke="#0c0c0c" stroke-width="1.3"/>
<!-- crosshair -->
<circle cx="151.9" cy="814.75" r="15.1" fill="url(#gcr)" stroke="#141414" stroke-width="1.7"/>
<path d="M137 814.75H166.8M151.9 799.8V829.7" stroke="#2c2c2c" stroke-width="1.8"/>
<circle cx="151.9" cy="814.75" r="3.4" fill="#5e5e5e" stroke="#1c1c1c" stroke-width="1.3"/>
<path d="M149.5 814.75H154.3M151.9 812.3V817.2" stroke="#3a3a3a" stroke-width="1"/>
<!-- stop -->
<path d="M185.4 799H198.6L208 808.4V821.6L198.6 831H185.4L176 821.6V808.4z" fill="url(#gst)"/>
<path d="M186 800.5H198L206.5 809V821L198 829.5H186L177.500 821V809z" fill="none" stroke="#fff" stroke-width="0.9"/>
<text transform="translate(192.1 821.2) scale(0.51 1)" text-anchor="middle" font-family="Liberation Sans, sans-serif" font-weight="bold" font-size="17.8" fill="#fff" stroke="#fff" stroke-width="0.6">STOP</text>
<!-- brain -->
<g transform="translate(0 0.5)">
<path d="M567.800 820.500L571 828.200L574.200 826.200L573.400 821.500z" fill="#f4e4e0" stroke="#2e1712" stroke-width="0.9"/>
<path d="M569.600 822.600l2.800 4M571 821.600l2 3.600" stroke="#3a201a" stroke-width=".7" stroke-dasharray=".8 .8"/>
<path d="M570.500 820C573.500 825 579.500 824 580.800 819.600L574 818.500z" fill="#f0898a" stroke="#4a2620" stroke-width="0.6"/>
<path d="M553.600 811.400C553 807.500 556.500 804 561 803.200C564 801.600 569 801.800 572 803C576 803 580.600 806 582.400 809.600C584 812.600 583.600 816 581.600 818.400C580.400 820.400 577.400 821.200 574.600 820.600C571.400 820.800 568.400 820 566.600 818.200C564.400 818 561.600 818.600 559.600 819.200C557.400 819.200 555.800 817.600 555.600 815.600C554.200 814.400 553.600 813 553.600 811.400z" fill="url(#gbr)" stroke="#2e1712" stroke-width="1"/>
<path d="M556.500 810c2-3 5-4 8-3.600M558.500 814c3-3 7-4 11-3M561 805.500c3-1.600 7-1.800 10-.6M565 816c3-2 6-2.600 10-2M569.500 807c3 .4 6 2 8 4.500M573 811c2 1 4 3 5 6M562.500 811.500c2-1.400 5-2 8-1.400M576 806.500c2 1.600 4 4 4.600 7M556 812.500c2-2 4-3 6-3M566 804.500c2-.6 5-.4 7 .4M560 816.500c2-1.600 4-2 6-1.800M571 814.500c2 .4 4 1.600 5 3.400M575 809c1.600 1 3 3 3.600 5M564 808.500c2-.8 4-.8 6-.2" fill="none" stroke="#fff" stroke-width="1.100" stroke-dasharray="1.600 0.900" opacity=".92"/>
<path d="M558 812c2-3 5-4 8-3.600M561 816c3-2.600 6-3.400 10-2.600M565 808.500c3-1 6-.8 9 .6M568 818c3-1.600 6-1.800 9-1M572 805c2 .6 4 2 5 3.600" fill="none" stroke="#e0674c" stroke-width="0.7" stroke-dasharray="1.200 1.600" opacity=".8"/>
</g>
<!-- camera wrench (disabled) -->
<path d="M594.5 808H601.500L604.500 804.500H612.500L615.500 808H621.500V825.500H594.500z" fill="url(#gcam)" stroke="#4a4a4a" stroke-width="1"/>
<path d="M596.6 825L605 816.2C604.8 814 605.200 812.600 605.600 811.900C606.200 810.800 607.200 810.200 608.100 810L610.600 810.600L608.750 813.750L610 816.250L612.500 815L614.400 815.600C614.400 817 614.200 818 613.750 818.750C613 819.800 612.200 820.400 611.250 820.600L608.750 820.600L605 825z" fill="#8a8a8a" stroke="#4c4c4c" stroke-width="0.9"/>
</svg>
<div style="left:216px;top:800px;width:1px;height:30px;background:#9a9a9a;"></div><div style="left:222px;top:803px;width:153.5px;height:23px;background:#e1e1e1;border:1px solid #adadad;"></div><span class="t" style="top:807.00px;height:17px;line-height:17px;font-size:12px;color:#000;letter-spacing:-0.754px;left:226.00px;">3.0 s</span><svg style="left:361px;top:811px" width="10" height="7" viewBox="0 0 10 7"><path d="M1 1l4 4 4-4" fill="none" stroke="#444" stroke-width="1.1"/></svg><div style="left:378px;top:803px;width:160px;height:24px;background:#404040;"></div><div style="left:386px;top:811px;width:144px;height:4px;background:#e7eaea;"></div><svg style="left:443px;top:805px" width="12" height="19" viewBox="0 0 12 19"><path d="M0.5 0h10.5v13.5L5.75 19L0.5 13.5z" fill="#0078d7"/></svg><div style="left:543px;top:800px;width:1px;height:30px;background:#9a9a9a;"></div><div style="left:0px;top:840px;width:1600px;height:20px;background:#000;"></div><span class="t" style="top:842.00px;height:17px;line-height:17px;font-size:12px;color:#fff;letter-spacing:-0.396px;left:4.00px;">Guidage</span><div style="left:1136px;top:840px;width:1px;height:19px;background:#d0d0d0;"></div><div style="left:1168px;top:840px;width:1px;height:19px;background:#d0d0d0;"></div><div style="left:1237px;top:840px;width:1px;height:19px;background:#d0d0d0;"></div><div style="left:1358px;top:840px;width:1px;height:19px;background:#d0d0d0;"></div><div style="left:1479px;top:840px;width:1px;height:19px;background:#d0d0d0;"></div><div style="left:1525px;top:840px;width:1px;height:19px;background:#d0d0d0;"></div><div style="left:1564px;top:840px;width:1px;height:19px;background:#d0d0d0;"></div><span class="t" style="top:842.00px;height:17px;line-height:17px;font-size:12px;color:#fff;letter-spacing:-2.344px;left:1175.00px;">RSB</span><span class="t" style="top:842.00px;height:17px;line-height:17px;font-size:12px;color:#00e000;letter-spacing:-1.008px;left:1201.50px;">121.3</span><span class="t" style="top:842.00px;height:17px;line-height:17px;font-size:12px;color:#00e000;letter-spacing:-0.448px;left:1488.00px;">Dark</span><span class="t" style="top:842.00px;height:17px;line-height:17px;font-size:12px;color:#00e000;letter-spacing:-1.008px;left:1534.50px;">Cal</span><div style="left:1574.5px;top:841.5px;width:16px;height:16px;border-radius:50%;background:radial-gradient(circle at 68% 28%,#22ea22,#10cc10 45%,#0a9c0a 100%);"></div><div style="left:0px;top:860px;width:1600px;height:40px;background:#211f1f;"></div><div style="left:48px;top:860px;width:343.5px;height:40px;background:#f3f3f3;border-top:1px solid #d6d6d6;"></div>
<div style="left:785px;top:860px;width:48px;height:40px;background:#646262;"></div>
<div style="left:544px;top:898px;width:40px;height:2px;background:#76b9ed;"></div>
<div style="left:740px;top:898px;width:40px;height:2px;background:#76b9ed;"></div>
<div style="left:785px;top:898px;width:48px;height:2px;background:#8cc4f0;"></div>
<div style="left:838px;top:898px;width:40px;height:2px;background:#76b9ed;"></div>
<div style="left:1596px;top:860px;width:1px;height:40px;background:#6e6e6e;"></div>
<svg style="left:0;top:860px" width="1600" height="40" viewBox="0 860 1600 40">
<defs>
<linearGradient id="edg1" x1="0" y1="0" x2="0.6" y2="1"><stop offset="0" stop-color="#2fb4ee"/><stop offset="0.55" stop-color="#1b86d4"/><stop offset="1" stop-color="#1268bc"/></linearGradient>
<linearGradient id="edg2" x1="0" y1="0.3" x2="1" y2="0.6"><stop offset="0" stop-color="#2bb4ee"/><stop offset="0.5" stop-color="#2fc4d0"/><stop offset="0.85" stop-color="#52d47a"/><stop offset="1" stop-color="#6adb58"/></linearGradient>
<linearGradient id="mailg" x1="0" y1="0" x2="1" y2="1"><stop offset="0" stop-color="#1a94e6"/><stop offset="1" stop-color="#33c1f5"/></linearGradient>
<radialGradient id="jup" cx="48%" cy="38%" r="62%"><stop offset="0" stop-color="#d4d0cc"/><stop offset="0.55" stop-color="#bdb4aa"/><stop offset="0.85" stop-color="#8c8278"/><stop offset="1" stop-color="#3e3a36"/></radialGradient>
<radialGradient id="phd" cx="50%" cy="50%" r="50%"><stop offset="0" stop-color="#0a2a0a"/><stop offset="0.4" stop-color="#168a22"/><stop offset="0.7" stop-color="#2cc03a"/><stop offset="0.9" stop-color="#1f9e2c"/><stop offset="1" stop-color="#0b4a12"/></radialGradient>
<linearGradient id="neb" x1="0" y1="0" x2="1" y2="1"><stop offset="0" stop-color="#2c1a3a"/><stop offset="0.5" stop-color="#4a2040"/><stop offset="1" stop-color="#2a1a3c"/></linearGradient>
<linearGradient id="roofg" x1="0" y1="0" x2="0" y2="1"><stop offset="0" stop-color="#1a7ad0"/><stop offset="1" stop-color="#0a53a6"/></linearGradient>
<radialGradient id="nebc" cx="50%" cy="45%" r="50%"><stop offset="0" stop-color="#d8506c"/><stop offset="0.6" stop-color="#a83052"/><stop offset="1" stop-color="#a83052" stop-opacity="0"/></radialGradient>
<filter id="blur1" x="-10%" y="-10%" width="120%" height="120%"><feGaussianBlur stdDeviation="0.45"/></filter>
<filter id="blur05" x="-10%" y="-10%" width="120%" height="120%"><feGaussianBlur stdDeviation="0.5"/></filter>
</defs>
<!-- windows logo -->
<path d="M16 874.300L22.900 873.300V879.600H16zM23.700 873.200L32 872V879.600H23.700zM16 880.400H22.900V886.700L16 885.700zM23.700 880.400H32V888L23.700 886.800z" fill="#fff"/>
<!-- search icon -->
<circle cx="70.300" cy="878.600" r="5.200" fill="none" stroke="#222" stroke-width="1.300"/>
<path d="M66.600 882.400L60.400 888" stroke="#222" stroke-width="1.400"/>
<!-- cortana -->
<circle cx="415.900" cy="879.700" r="6.900" fill="none" stroke="#fff" stroke-width="2"/>
<!-- task view -->
<g fill="none" stroke="#fff" stroke-width="1.300"><path d="M457.200 875.200H467V884.300H457.200z"/><path d="M456 872.700H467.600M456 886.400H467.600"/><path d="M470.800 872V875.600M470.800 879.600V887" stroke-width="1.300"/><rect x="469.500" y="876.400" width="2.600" height="2.400" fill="#fff" stroke="none"/></g>
<!-- edge -->
<g transform="translate(495 862) scale(0.0625)">
<circle cx="322" cy="285" r="193" fill="url(#edg1)"/>
<path d="M250 290C253 278 262 266 275 255C300 236 340 240 360 265C378 290 372 318 352 330C368 345 400 358 440 356C490 352 515 320 515 285L545 285L545 410L485 385C430 392 360 390 300 365C270 345 255 320 250 290z" fill="#211f1f"/>
<path d="M250 290C255 320 270 345 300 365C360 390 430 392 485 385C440 465 330 490 255 435C200 385 215 320 250 290z" fill="#0c55a3"/>
<path d="M132 255A193 193 0 0 1 515 285C515 320 490 352 440 356C400 358 368 345 352 330C372 318 378 290 360 265C340 240 300 236 275 255C262 266 253 278 250 290C225 250 170 225 132 255z" fill="url(#edg2)"/>
</g>
<!-- folder -->
<path d="M552.800 872.200H574.100C574.500 872.200 574.800 872.500 574.800 872.900V887.300C574.800 887.700 574.500 888 574.100 888H553.500C553.100 888 552.800 887.700 552.800 887.300z" fill="#fcd463"/>
<path d="M552.800 873.600V871.700C552.800 871.300 553.100 871 553.500 871H561.400C561.800 871 562.100 871.200 562.300 871.500L563 873.600z" fill="#e9a40f"/>
<path d="M560.600 884.500H567.200V888H560.600z" fill="#fcc73c"/>
<path d="M556.900 889V882C556.900 881.400 557.300 881 557.900 881H569.900C570.500 881 570.900 881.400 570.900 882V889H567.200V884.500H560.600V889z" fill="#3d8fe4"/>
<!-- store -->
<path d="M608.700 874V872.500C608.700 869.800 610.700 868.200 613.500 868.200C616.300 868.200 618.600 869.800 618.600 872.500V874" fill="none" stroke="#f4f4f4" stroke-width="1.200"/>
<path d="M611 874V872.800C611 871.200 612 870.200 613.600 870.200C615.200 870.200 616.600 871.200 616.600 872.800V874" fill="none" stroke="#dcdcdc" stroke-width="1"/>
<path d="M600.900 873.600H624.100V889.700C624.100 890.500 623.500 891.100 622.700 891.100H602.300C601.500 891.100 600.900 890.500 600.900 889.700z" fill="#fff"/>
<rect x="607" y="877" width="4.900" height="4.800" fill="#f25022"/><rect x="613.100" y="877" width="4.900" height="4.800" fill="#7fba00"/><rect x="607" y="883.100" width="4.900" height="4.700" fill="#00a4ef"/><rect x="613.100" y="883.100" width="4.900" height="4.700" fill="#ffb900"/>
<!-- mail -->
<path d="M649.900 875.400H674.100V891H649.900z" fill="#1e98e8"/>
<path d="M649.900 875.400L661.900 868.600L674.100 875.400z" fill="url(#roofg)"/>
<path d="M651.900 876.200H671.900L661.900 882.900z" fill="#f2f2f2"/>
<path d="M674.100 875.400L661.900 883.200L674.100 891z" fill="#37c5f6"/>
<!-- nebula C icon -->
<rect x="699" y="868" width="24" height="24" fill="url(#neb)"/>
<circle cx="712" cy="878.500" r="6.500" fill="url(#nebc)"/>
<circle cx="718.500" cy="881" r="3.500" fill="#a83654" opacity=".6"/><circle cx="704" cy="888" r="3.500" fill="#7a2848" opacity=".4"/><circle cx="719" cy="871.500" r="3" fill="#6a2a58" opacity=".4"/><circle cx="703" cy="872" r="3" fill="#5a2450" opacity=".4"/><circle cx="717" cy="889" r="3" fill="#6a2448" opacity=".45"/><circle cx="711" cy="881.500" r="2.200" fill="#2a1a40" opacity=".8"/>
<text x="701.800" y="887.400" font-family="Liberation Serif, serif" font-weight="bold" font-size="22.5" fill="#12a6f2">C</text>
<circle cx="712.700" cy="879" r="4.600" fill="#b84862" opacity=".9"/><circle cx="711.500" cy="877" r="2.200" fill="#d86478" opacity=".8"/><circle cx="711.500" cy="881.800" r="2" fill="#3a2048" opacity=".8"/><circle cx="711.400" cy="876.600" r=".8" fill="#fff" opacity=".7"/>
<!-- jupiter -->
<g filter="url(#blur1)"><circle cx="760.300" cy="880.100" r="10.700" fill="url(#jup)"/>
<path d="M750.300 876.300H770.300M749.800 878.800H770.800" stroke="#b08e6c" stroke-width="1.100" opacity=".8"/><path d="M750 882.500H770.600M751.500 885.500H769" stroke="#a89078" stroke-width="1" opacity=".5"/></g>
<path d="M748.100 883.300L757.800 880.100L760 886.700L750.900 891z" fill="#b4a480"/>
<path d="M750 884.100L757 881.800L758.500 886.200L751.700 889.200z" fill="#76c4b4"/>
<circle cx="757.500" cy="885.500" r="1.200" fill="#9ae070"/>
<!-- phd2 -->
<circle cx="809.100" cy="879.800" r="11.600" fill="url(#phd)" stroke="#07300c" stroke-width="0.900"/>
<path d="M797.500 879.800H820.700M809.100 868.200V891.400" stroke="#0a4410" stroke-width="1.500"/>
<circle cx="809.100" cy="879.800" r="4.500" fill="#050505"/>
<text x="809" y="881.400" text-anchor="middle" font-family="Liberation Sans, sans-serif" font-weight="bold" font-size="4.300" fill="#fff">PHD</text>
<text x="813.200" y="877.800" font-family="Liberation Sans, sans-serif" font-weight="bold" font-size="4.600" fill="#e8ffe8">2</text>
<!-- orange -->
<rect x="845.900" y="867.900" width="24.100" height="24.100" fill="#fffaf6"/>
<clipPath id="oclip"><rect x="845.900" y="867.900" width="24.100" height="24.100"/></clipPath>
<g clip-path="url(#oclip)" filter="url(#blur05)"><circle cx="859" cy="880.100" r="12.600" fill="#f5921f"/>
<path d="M850.600 871.400C847.500 874.500 847.400 880 849.500 883.500C852.500 888.200 859 890.500 867.500 889.500L869 886.600C863 886.600 858.200 884.600 856 881C854 878 854 873.600 855.600 870.750C853.800 870.400 852 870.600 850.600 871.400z" fill="#fffaf6"/></g>
<!-- tray -->
<path d="M1387.200 882.600L1393.200 876.600L1399.200 882.600" fill="none" stroke="#fff" stroke-width="1.300"/>
<g fill="none" stroke="#fff" stroke-width="1.100"><rect x="1413.300" y="876.700" width="10.600" height="7"/><path d="M1424.600 878.700V881.700"/></g>
<rect x="1414.600" y="878" width="8" height="4.400" fill="#fff"/>
<path d="M1410.200 873.800V876M1412.400 873.800V876" stroke="#fff" stroke-width="0.900" fill="none"/>
<path d="M1409.200 876H1413.400V878.400C1413.400 879.400 1412.600 880 1411.800 880H1410.800C1410 880 1409.200 879.400 1409.200 878.400z" fill="#fff"/>
<path d="M1411.300 880V884.500H1413" stroke="#fff" stroke-width="1" fill="none"/>
<rect x="1412.300" y="875.200" width="1.600" height="9.800" fill="#211f1f" opacity="0"/>
<path d="M1448.300 880.500C1448.300 879.500 1447.200 879.200 1446.200 879.200L1442.400 879.200L1438.600 872.900L1436.800 872.900L1438.800 879.200L1435.800 879.200L1434.300 877.200L1433 877.200L1433.900 880.500L1433 883.800L1434.300 883.800L1435.800 881.800L1438.800 881.800L1436.800 888.100L1438.600 888.100L1442.400 881.800L1446.200 881.800C1447.200 881.800 1448.300 881.500 1448.300 880.500z" fill="none" stroke="#fff" stroke-width="1.150" stroke-linejoin="round"/>
<path d="M1457.500 877.800H1460.400L1464 874.400V886L1460.400 882.600H1457.500z" fill="none" stroke="#fff" stroke-width="1.100"/>
<path d="M1466.200 877.600C1467.400 879 1467.400 881.400 1466.200 882.800" fill="none" stroke="#fff" stroke-width="1"/>
<path d="M1468.400 875.600C1470.600 878.200 1470.600 882.200 1468.400 884.800M1470.600 873.800C1473.800 877.600 1473.800 882.800 1470.600 886.600" fill="none" stroke="#8a8a8a" stroke-width="1"/>
<path d="M1559.300 872.600H1574.500V884.200H1569.600L1566.900 887.200L1564.200 884.200H1559.300z" fill="none" stroke="#fff" stroke-width="1.200"/>
</svg>
<span class="t" style="top:870.00px;height:21px;line-height:21px;font-size:15px;color:#2b2b2b;letter-spacing:-0.122px;left:88.00px;">Taper ici pour rechercher</span><div class="t" style="top:863.00px;height:17px;line-height:17px;font-size:12px;color:#fff;letter-spacing:-0.508px;left:1511.40px;width:0;display:flex;justify-content:center;"><span>01:54</span></div><div class="t" style="top:881.00px;height:17px;line-height:17px;font-size:12px;color:#fff;letter-spacing:-0.340px;left:1512.50px;width:0;display:flex;justify-content:center;"><span>17/05/2020</span></div></body></html>
